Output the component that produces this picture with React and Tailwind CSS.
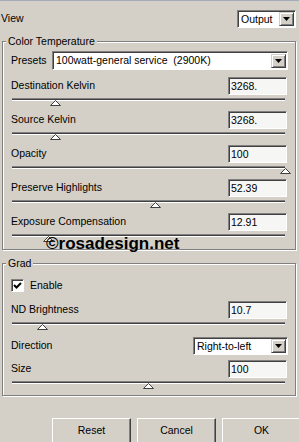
const sunken =
  'border border-t-[#808080] border-l-[#808080] border-b-white border-r-white shadow-[inset_1px_1px_0_#404040]';
const raised =
  'border border-t-white border-l-white border-b-[#404040] border-r-[#404040] bg-[#d4d0c8] shadow-[inset_-1px_-1px_0_#808080]';

function DropDown({ text, className }) {
  return (
    <div className={`flex items-center bg-white ${sunken} ${className}`}>
      <span className="flex-1 whitespace-pre pl-[3px] leading-none">{text}</span>
      <span
        className={`mr-px flex h-[14px] w-[15px] items-center justify-center border border-t-[#d4d0c8] border-l-[#d4d0c8] border-b-[#404040] border-r-[#404040] bg-[#d4d0c8] shadow-[inset_1px_1px_0_#fff,inset_-1px_-1px_0_#808080]`}
      >
        <svg width="7" height="4" viewBox="0 0 7 4">
          <path d="M0 0H7L3.5 4Z" fill="#000" />
        </svg>
      </span>
    </div>
  );
}

function TextBox({ value }) {
  return (
    <div className={`flex h-[18px] w-[59px] items-center bg-[#f6f6f4] pl-[2px] leading-none ${sunken}`}>
      {value}
    </div>
  );
}

function SliderRow({ label, value, pct }) {
  return (
    <div className="h-[34px]">
      <div className="flex h-[18px] items-center justify-between pl-[8px] pr-[8px]">
        <span>{label}</span>
        <TextBox value={value} />
      </div>
      <div className="relative ml-[9px] mr-[10px] mt-[3px] h-[2px] border-t border-[#808080] bg-[#404040] shadow-[0_1px_0_#fff]">
        <svg
          className="absolute top-[1px] -ml-[5px]"
          style={{ left: `${pct}%` }}
          width="11"
          height="6"
          viewBox="0 0 11 6"
        >
          <path d="M5.5 0.5L10.5 5.5H0.5Z" fill="#fff" stroke="#404040" />
        </svg>
      </div>
    </div>
  );
}

function Group({ title, className, children }) {
  return (
    <div
      className={`relative mx-[2px] w-[294px] border border-[#808080] shadow-[inset_1px_1px_0_#fff,1px_1px_0_#fff] ${className}`}
    >
      <span className="absolute -top-[7px] left-[3px] bg-[#d4d0c8] px-[2px] leading-[13px]">
        {title}
      </span>
      {children}
    </div>
  );
}

function Button({ children }) {
  return (
    <button className={`flex h-[26px] w-[79px] shrink-0 items-center justify-center ${raised}`}>
      {children}
    </button>
  );
}

export default function App() {
  return (
    <div className="flex h-[442px] w-[299px] flex-col overflow-hidden border-t border-[#a3acba] bg-[#d4d0c8] font-['Liberation_Sans',Arial,sans-serif] text-[10.5px] text-black">
      <div className="flex items-center justify-between pl-px pr-[3px] pt-[9px]">
        <span>View</span>
        <DropDown text="Output" className="h-[18px] w-[59px]" />
      </div>

      <Group title="Color Temperature" className="mt-[13px] pb-[2px] pt-[9px]">
        <div className="flex items-center pl-[8px] pr-[7px]">
          <span>Presets</span>
          <DropDown text="100watt-general service  (2900K)" className="ml-auto h-[19px] w-[236px]" />
        </div>
        <div className="mt-[7px]">
          <SliderRow label="Destination Kelvin" value="3268." pct={15.8} />
          <SliderRow label="Source Kelvin" value="3268." pct={15.8} />
          <SliderRow label="Opacity" value="100" pct={100} />
          <SliderRow label="Preserve Highlights" value="52.39" pct={52.4} />
          <SliderRow label="Exposure Compensation" value="12.91" pct={13.2} />
        </div>
        <span className="absolute left-[43px] top-[193px] text-[17px] font-bold leading-none">
          ©rosadesign.net
        </span>
      </Group>

      <Group title="Grad" className="mt-[13px] pb-px pt-[14px]">
        <div className="flex items-center gap-[6px] pl-[8px]">
          <span className={`flex h-[13px] w-[13px] items-center justify-center bg-white ${sunken}`}>
            <svg width="9" height="9" viewBox="0 0 9 9">
              <path d="M1 4L3.5 6.5L8 2" fill="none" stroke="#000" strokeWidth="2" />
            </svg>
          </span>
          <span>Enable</span>
        </div>
        <div className="mt-[7px]">
          <SliderRow label="ND Brightness" value="10.7" pct={11} />
        </div>
        <div className="mt-[2px] flex items-center pl-[8px] pr-[7px]">
          <span>Direction</span>
          <DropDown text="Right-to-left" className="ml-auto h-[18px] w-[95px]" />
        </div>
        <div className="mt-[5px]">
          <SliderRow label="Size" value="100" pct={49.8} />
        </div>
      </Group>

      <div className="mt-[22px] flex gap-[6px] pl-[52px]">
        <Button>Reset</Button>
        <Button>Cancel</Button>
        <Button>OK</Button>
      </div>
    </div>
  );
}
